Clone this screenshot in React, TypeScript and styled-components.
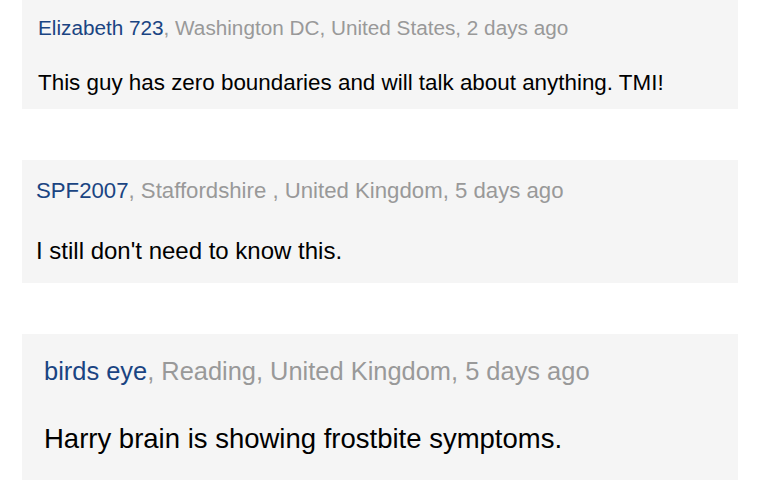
import React from "react";
import styled, { createGlobalStyle } from "styled-components";

const GlobalStyle = createGlobalStyle`
  html, body {
    margin: 0;
    padding: 0;
    background: #ffffff;
  }
  body {
    font-family: "Liberation Sans", Arial, Helvetica, sans-serif;
  }
`;

const List = styled.div`
  display: flex;
  flex-direction: column;
  gap: 51px;
  padding: 0 22px;
`;

type CardProps = {
  $size: number;
  $pt: number;
  $pl: number;
  $pb: number;
  $gap: number;
};

const Card = styled.div<CardProps>`
  display: flex;
  flex-direction: column;
  gap: ${(p) => p.$gap}px;
  padding: ${(p) => `${p.$pt}px ${p.$pl}px ${p.$pb}px`};
  background: #f5f5f5;
  font-size: ${(p) => p.$size}px;
  line-height: 1.2;
`;

const Meta = styled.div`
  font-size: 0.925em;
  color: #999999;
  white-space: nowrap;
`;

const Author = styled.a`
  color: #1a4482;
  text-decoration: none;
`;

const Body = styled.p`
  margin: 0;
  color: #000000;
`;

const comments = [
  {
    author: "Elizabeth 723",
    place: "Washington DC, United States",
    when: "2 days ago",
    text: "This guy has zero boundaries and will talk about anything. TMI!",
    size: 22.4,
    pt: 15.6,
    pl: 16,
    pb: 12.5,
    gap: 29.2,
  },
  {
    author: "SPF2007",
    place: "Staffordshire , United Kingdom",
    when: "5 days ago",
    text: "I still don't need to know this.",
    size: 24,
    pt: 17.7,
    pl: 14,
    pb: 17.6,
    gap: 32.3,
  },
  {
    author: "birds eye",
    place: "Reading, United Kingdom",
    when: "5 days ago",
    text: "Harry brain is showing frostbite symptoms.",
    size: 27.5,
    pt: 21.7,
    pl: 22,
    pb: 32,
    gap: 36.2,
  },
];

export default function App() {
  return (
    <>
      <GlobalStyle />
      <List>
        {comments.map((c) => (
          <Card
            key={c.author}
            $size={c.size}
            $pt={c.pt}
            $pl={c.pl}
            $pb={c.pb}
            $gap={c.gap}
          >
            <Meta>
              <Author href="#">{c.author}</Author>, {c.place}, {c.when}
            </Meta>
            <Body>{c.text}</Body>
          </Card>
        ))}
      </List>
    </>
  );
}
